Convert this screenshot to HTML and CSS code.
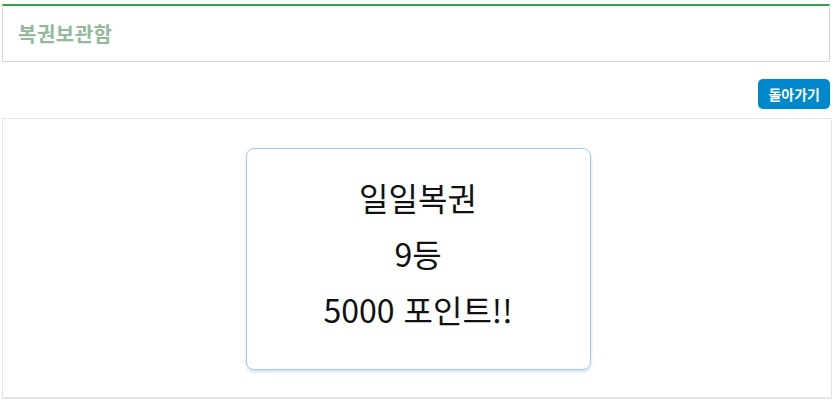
FILE: index.html
```html
<!DOCTYPE html>
<html lang="ko">
<head>
    <meta charset="UTF-8">
    <meta name="viewport" content="width=device-width, initial-scale=1.0">
    <title>복권보관함</title>
    <link rel="stylesheet" href="styles.css">
</head>
<body>
    <div class="page">
        <div class="box-header">
            <h3 class="box-title">복권보관함</h3>
        </div>

        <div class="toolbar">
            <button type="button" class="back-btn">돌아가기</button>
        </div>

        <div class="box-body">
            <div class="ticket">
                <p>일일복권</p>
                <p>9등</p>
                <p>5000 포인트!!</p>
            </div>
        </div>
    </div>
</body>
</html>
```

FILE: styles.css
```css
* {
    margin: 0;
    padding: 0;
    box-sizing: border-box;
    font-family: 'Noto Sans CJK KR', 'Noto Sans', sans-serif;
}

body {
    background: #fff;
}

.page {
    padding: 4px 3px 0 2px;
}

.box-header {
    height: 58px;
    border-top: 2px solid #2fa54d;
    border-left: 1px solid #d2d6de;
    border-right: 1px solid #d2d6de;
    border-bottom: 1px solid #d2d6de;
    display: flex;
    align-items: center;
    padding-left: 15px;
    margin-right: 2px;
}

.box-title {
    font-size: 20px;
    font-weight: 700;
    color: #93b89c;
    letter-spacing: 0.5px;
}

.toolbar {
    display: flex;
    justify-content: flex-end;
    padding: 17px 2px 9px 0;
}

.back-btn {
    background: #0088cc;
    color: #fff;
    border: none;
    border-radius: 5px;
    font-size: 14px;
    font-weight: 700;
    height: 30px;
    padding: 0 10px;
    cursor: pointer;
}

.box-body {
    height: 281px;
    border: 1px solid #e3e3e3;
    border-bottom: 2px solid #e6e6e6;
    display: flex;
    justify-content: center;
    padding-top: 29px;
}

.ticket {
    width: 345px;
    height: 222px;
    border: 1px solid #9fcbec;
    border-radius: 8px;
    box-shadow: 0 2px 3px rgba(80, 130, 170, 0.25);
    display: flex;
    flex-direction: column;
    align-items: center;
    padding-top: 20px;
    margin-left: 2px;
}

.ticket p {
    font-size: 32px;
    line-height: 56px;
    color: #111;
}
```
